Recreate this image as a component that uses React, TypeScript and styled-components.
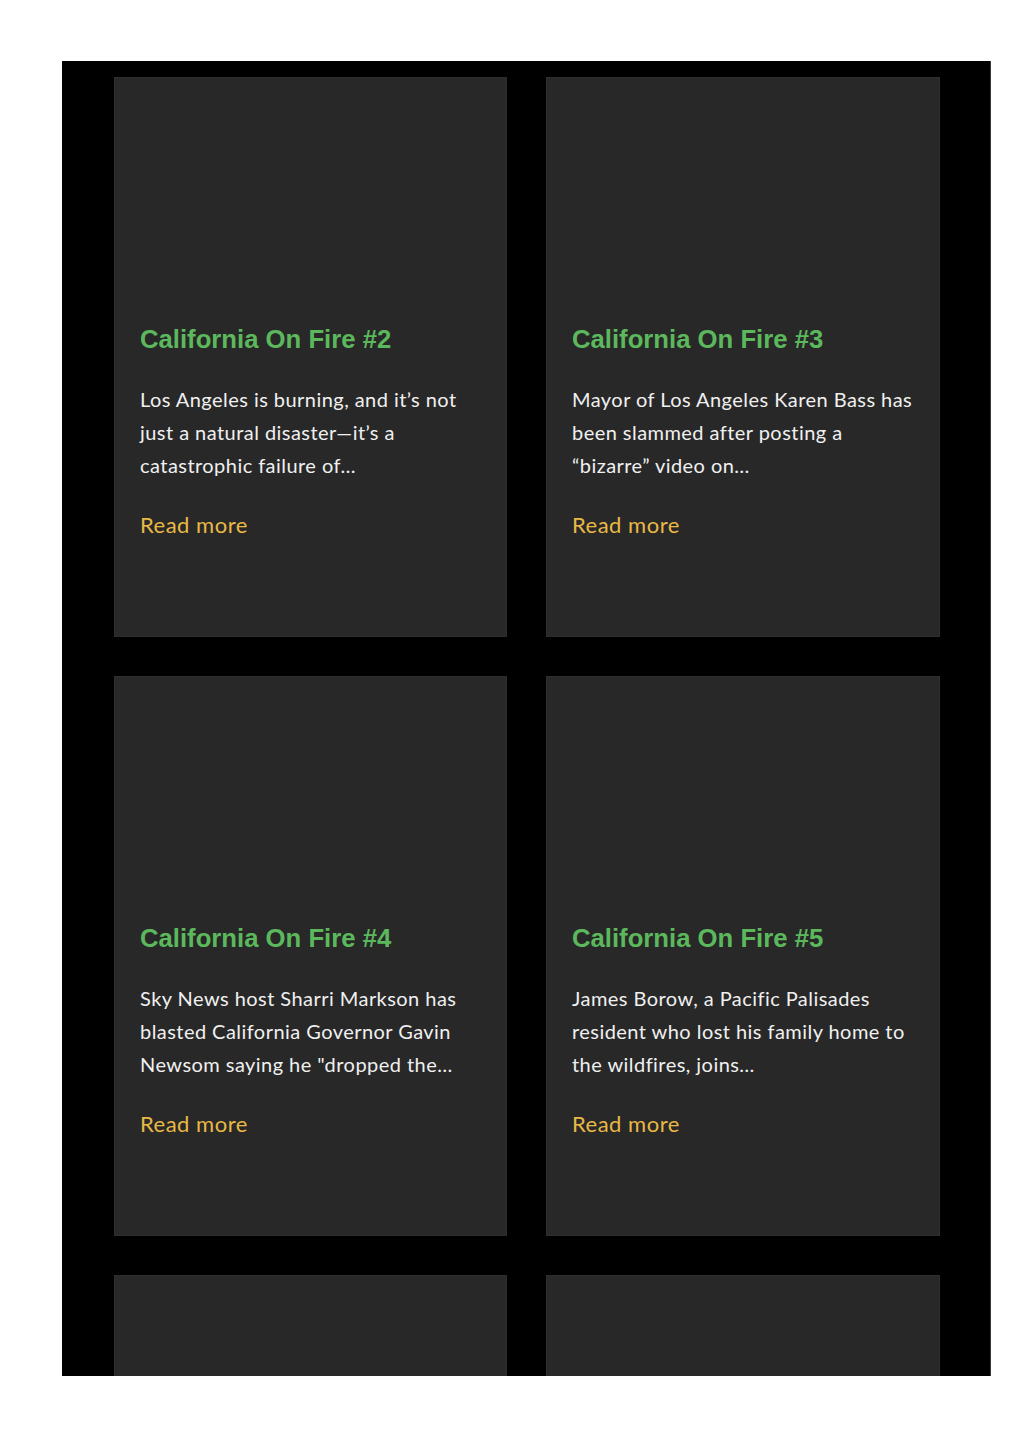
import React from "react";
import styled, { createGlobalStyle } from "styled-components";

const Global = createGlobalStyle`
  html, body { margin: 0; padding: 0; background: #ffffff; }
  body { font-family: "Lato", "Open Sans", sans-serif; }
  * { box-sizing: border-box; }
`;

const Page = styled.div`
  padding: 61px 0 0 62px;
  min-height: 1449px;
`;

const Board = styled.section`
  width: 929px;
  height: 1315px;
  background: #000000;
  overflow: hidden;
  padding: 16px 51px 0 52px;
  border-right: 1px solid #3a3a3a;
`;

const Grid = styled.div`
  display: grid;
  grid-template-columns: 393px 394px;
  column-gap: 39px;
  row-gap: 39px;
`;

const Card = styled.article`
  height: 560px;
  background: #282828;
  border: 1px solid #2e2e2e;
  padding: 246px 22px 0 25px;
`;

const Title = styled.h2`
  margin: 0;
  font-family: "Liberation Sans", Arial, sans-serif;
  font-weight: 700;
  font-size: 25.7px;
  line-height: 31px;
  color: #5cb85c;
`;

const Excerpt = styled.p`
  margin: 28px 0 0;
  font-family: "Lato", "Open Sans", sans-serif;
  font-size: 20px;
  letter-spacing: 0.45px;
  line-height: 33px;
  color: #f0f0f0;
`;

const ReadMore = styled.a`
  display: inline-block;
  margin-top: 26px;
  font-family: "Lato", "Open Sans", sans-serif;
  font-size: 22px;
  letter-spacing: 0.5px;
  line-height: 33px;
  color: #e8b946;
  text-decoration: none;
`;

const posts = [
  {
    title: "California On Fire #2",
    text: "Los Angeles is burning, and it’s not just a natural disaster—it’s a catastrophic failure of…",
  },
  {
    title: "California On Fire #3",
    text: "Mayor of Los Angeles Karen Bass has been slammed after posting a “bizarre” video on…",
  },
  {
    title: "California On Fire #4",
    text: "Sky News host Sharri Markson has blasted California Governor Gavin Newsom saying he \"dropped the…",
  },
  {
    title: "California On Fire #5",
    text: "James Borow, a Pacific Palisades resident who lost his family home to the wildfires, joins…",
  },
  { title: "", text: "" },
  { title: "", text: "" },
];

export default function App() {
  return (
    <>
      <Global />
      <Page>
        <Board>
          <Grid>
            {posts.map((p, i) => (
              <Card key={i}>
                {p.title && (
                  <>
                    <Title>{p.title}</Title>
                    <Excerpt>{p.text}</Excerpt>
                    <ReadMore href="#">Read more</ReadMore>
                  </>
                )}
              </Card>
            ))}
          </Grid>
        </Board>
      </Page>
    </>
  );
}
